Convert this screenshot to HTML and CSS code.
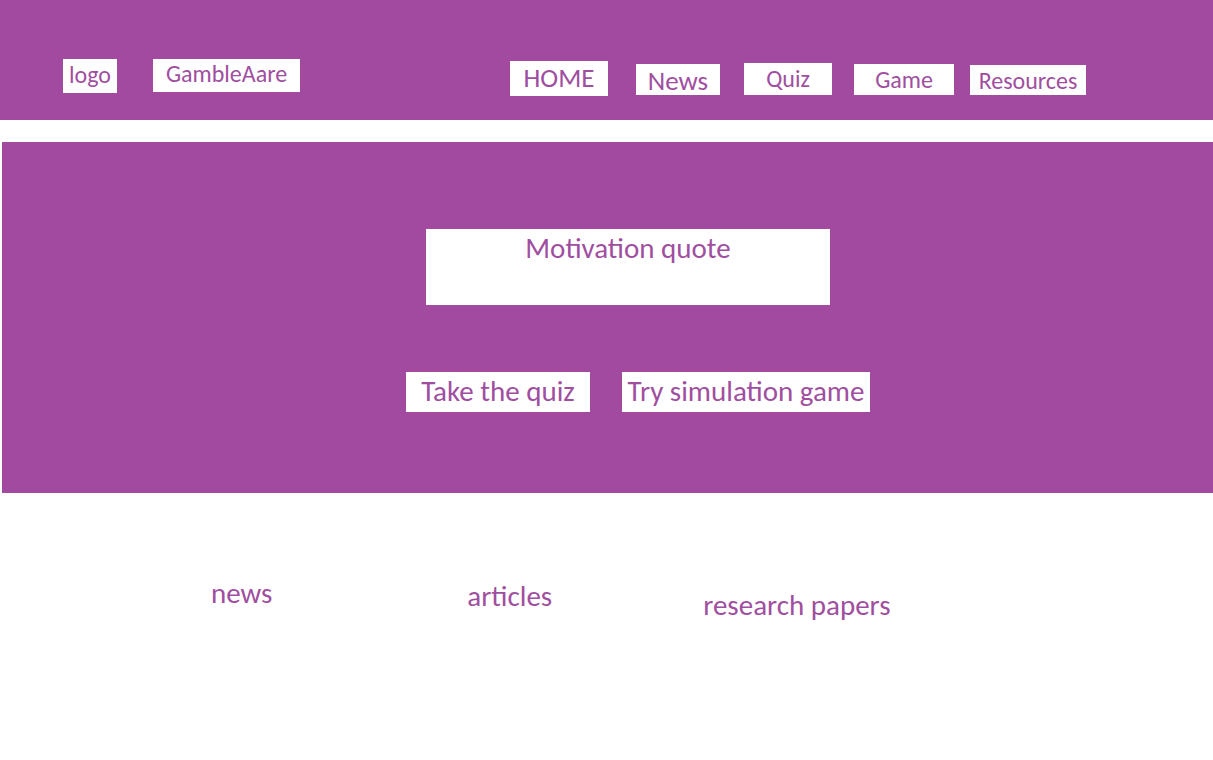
FILE: index.html
```html
<!DOCTYPE html>
<html lang="en">
<head>
<meta charset="utf-8">
<title>GambleAare</title>
<link rel="stylesheet" href="styles.css">
</head>
<body>
<header class="topbar">
  <div class="brand">
    <div class="box logo">logo</div>
    <div class="box site-name">GambleAare</div>
  </div>
  <nav class="nav">
    <a class="box nav-home">HOME</a>
    <a class="box nav-news">News</a>
    <a class="box nav-quiz">Quiz</a>
    <a class="box nav-game">Game</a>
    <a class="box nav-res">Resources</a>
  </nav>
</header>
<section class="hero">
  <div class="quote">Motivation quote</div>
  <div class="actions">
    <a class="cta cta-quiz">Take the quiz</a>
    <a class="cta cta-game">Try simulation game</a>
  </div>
</section>
<section class="links">
  <a class="link link-news">news</a>
  <a class="link link-articles">articles</a>
  <a class="link link-papers">research papers</a>
</section>
</body>
</html>
```
FILE: styles.css
```css
* { box-sizing: border-box; }
body {
  margin: 0;
  background: #ffffff;
  font-family: Carlito, "Open Sans", "Noto Sans", sans-serif;
  color: #a04fa0;
}
a { color: inherit; text-decoration: none; }

.topbar {
  display: flex;
  align-items: flex-start;
  height: 120px;
  background: #a24aa0;
  padding: 59px 0 0 63px;
}
.brand { display: flex; gap: 36px; }
.box {
  display: flex;
  justify-content: center;
  align-items: center;
  background: #fff;
  color: #a04fa0;
  font-size: 24px;
  line-height: 1;
}
.logo { width: 54px; height: 34px; padding-bottom: 3px; }
.site-name { width: 147px; height: 33px; padding-bottom: 3px; }

.nav { display: flex; align-items: flex-start; margin-left: 210px; }
.nav-home { width: 98px; height: 35px; margin-top: 2px; font-size: 27px; padding-bottom: 2px; }
.nav-news { width: 84px; height: 31px; margin: 5px 0 0 28px; font-size: 27px; padding-top: 1px; }
.nav-quiz { width: 88px; height: 32px; margin: 4px 0 0 24px; padding-bottom: 1px; }
.nav-game { width: 100px; height: 31px; margin: 5px 0 0 22px; padding-top: 1px; }
.nav-res { width: 116px; height: 30px; margin: 6px 0 0 16px; padding-top: 2px; }

.hero {
  display: flex;
  flex-direction: column;
  align-items: flex-start;
  height: 351px;
  margin: 22px 0 0 2px;
  background: #a24aa0;
  padding-top: 87px;
}
.quote {
  width: 404px;
  height: 76px;
  margin-left: 424px;
  background: #fff;
  text-align: center;
  font-size: 29px;
  line-height: 1;
  padding-top: 5px;
}
.actions {
  display: flex;
  gap: 32px;
  margin: 67px 0 0 404px;
}
.cta {
  display: flex;
  justify-content: center;
  align-items: center;
  height: 40px;
  background: #fff;
  font-size: 29px;
  line-height: 1;
  padding-bottom: 2px;
}
.cta-quiz { width: 184px; }
.cta-game { width: 248px; }

.links {
  display: flex;
  align-items: flex-start;
  padding: 83px 0 0 211px;
  font-size: 29px;
  line-height: 34px;
}
.link-articles { margin: 3px 0 0 195px; }
.link-papers { margin: 12px 0 0 151px; }
```
